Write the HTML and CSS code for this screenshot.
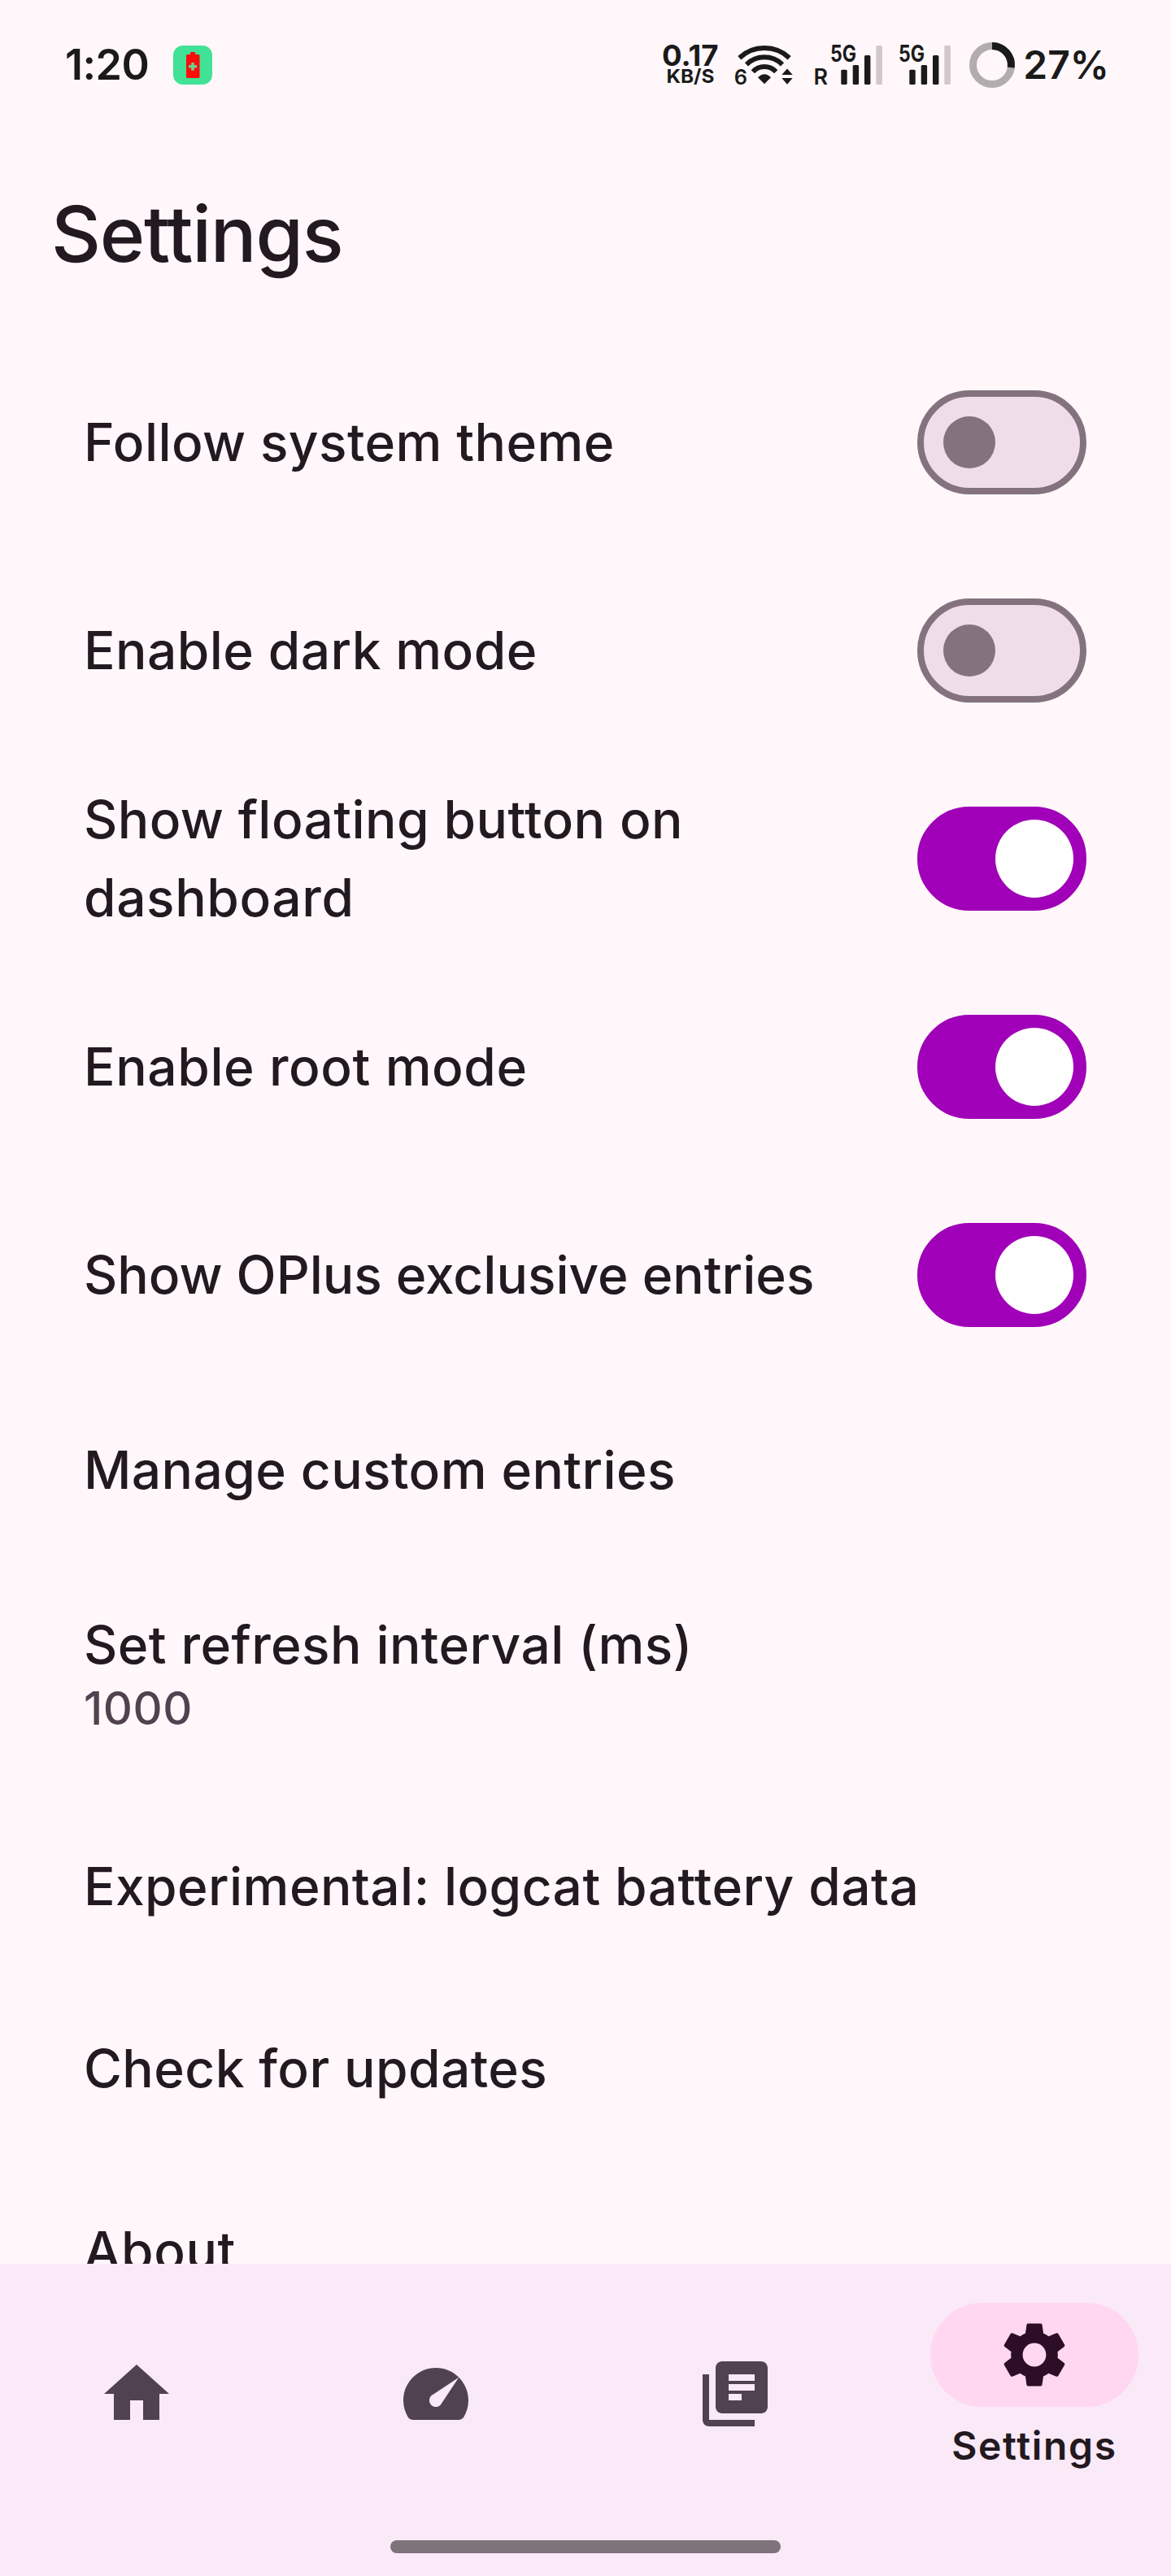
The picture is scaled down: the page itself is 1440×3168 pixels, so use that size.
FILE: index.html
```html
<!DOCTYPE html>
<html lang="en">
<head>
<meta charset="utf-8">
<title>Settings</title>
<link rel="stylesheet" href="styles.css">
</head>
<body>
<div class="screen">
  <header class="status">
    <span class="clock">1:20</span>
    <svg class="app-badge" viewBox="0 0 48 48"><rect width="48" height="48" rx="12" fill="#41e295"/><path d="M21 8h6v3h4a1.500 1.500 0 0 1 1.500 1.500v26a1.500 1.500 0 0 1-1.500 1.500h-13.500a1.500 1.500 0 0 1-1.500-1.500v-26a1.500 1.500 0 0 1 1.500-1.500h3.500z" fill="#ff0b0b"/><path d="M22.200 21h3.600v3h3.200v3.600h-3.200v3.200h-3.600v-3.200h-3.200v-3.600h3.200z" fill="#6fce8d"/></svg>
    <svg class="speed" viewBox="816 50 72 60"><text x="816" y="81.300" font-size="35.500" textLength="69.500" lengthAdjust="spacingAndGlyphs">0.17</text><text x="821.500" y="102.300" font-size="23" textLength="59" lengthAdjust="spacingAndGlyphs">KB/S</text></svg>
    <svg class="wifi" viewBox="904 50 76 60">
      <text x="904.700" y="103.600" font-size="25.500">6</text>
      <g fill="none" stroke="#1a1a1a" stroke-width="6"><path d="M911.300 71.200A45 45 0 0 1 972.700 71.200"/><path d="M920 79.300A31.500 31.500 0 0 1 964 79.300"/><path d="M927.800 88.200A19.500 19.500 0 0 1 956.200 88.200"/></g>
      <path d="M934 95.300Q942 87 950 95.300L942 103.300zM963.300 92L970 84.500L976.700 92zM963.300 96H976.700L970 103.800z"/>
    </svg>
    <svg class="signal-roaming" viewBox="1002 50 86 60">
      <text x="1002.500" y="103.700" font-size="27" textLength="17.500" lengthAdjust="spacingAndGlyphs">R</text>
      <text class="gen" x="1023" y="75.800" font-size="28" textLength="32" lengthAdjust="spacingAndGlyphs">5G</text>
      <rect x="1036.300" y="85.700" width="7.400" height="18.300" rx="1.500"/><rect x="1050.700" y="80" width="7.400" height="24" rx="1.500"/><rect x="1065" y="68" width="7.400" height="36" rx="1.500"/><rect class="dim" x="1079.300" y="56" width="7.600" height="48" rx="1.500"/>
    </svg>
    <svg class="signal" viewBox="1106 50 66 60">
      <text class="gen" x="1107" y="75.800" font-size="28" textLength="32" lengthAdjust="spacingAndGlyphs">5G</text>
      <rect x="1120.300" y="85.700" width="7.400" height="18.300" rx="1.500"/><rect x="1134.700" y="80" width="7.400" height="24" rx="1.500"/><rect x="1149" y="68" width="7.400" height="36" rx="1.500"/><rect class="dim" x="1163.300" y="56" width="7.600" height="48" rx="1.500"/>
    </svg>
    <svg class="ring" viewBox="0 0 56 56" fill="none" stroke-width="9"><circle cx="28" cy="28" r="23.500" stroke="#b2acaf"/><path d="M28 4.500A23.500 23.500 0 0 1 51.310 31" stroke="#1a1a1a"/></svg>
    <span class="percent">27%</span>
  </header>
  <h1 class="title">Settings</h1>
  <main class="list">
    <div class="row toggle"><span class="label">Follow system theme</span><span class="switch"><i class="thumb"></i></span></div>
    <div class="row toggle"><span class="label">Enable dark mode</span><span class="switch"><i class="thumb"></i></span></div>
    <div class="row toggle"><span class="label">Show floating button on <span class="wide">dashboard</span></span><span class="switch on"><i class="thumb"></i></span></div>
    <div class="row toggle"><span class="label wide">Enable root mode</span><span class="switch on"><i class="thumb"></i></span></div>
    <div class="row toggle"><span class="label tight">Show OPlus exclusive entries</span><span class="switch on"><i class="thumb"></i></span></div>
    <div class="row"><span class="label">Manage custom entries</span></div>
    <div class="row stacked"><span class="label">Set refresh interval (ms)</span><span class="value">1000</span></div>
    <div class="row"><span class="label">Experimental: logcat battery data</span></div>
    <div class="row"><span class="label">Check for updates</span></div>
    <div class="row"><span class="label wide">About</span></div>
  </main>
  <footer class="bottom">
    <nav class="nav">
      <a class="tab"><svg class="icon" viewBox="0 0 24 24"><path d="M10 20v-6h4v6h5v-8h3L12 3 2 12h3v8z"/></svg></a>
      <a class="tab"><svg class="icon" viewBox="0 0 24 24"><path fill-rule="evenodd" d="M12 4C6.480 4 2 8.480 2 14c0 1.800.5 3.500 1.340 5 .36.63 1 1 1.730 1h13.850c.72 0 1.380-.38 1.730-1 .87-1.500 1.350-3.200 1.350-5 0-5.520-4.480-10-10-10zM13.410 15.410c-.78.78-2.050.78-2.830 0s-.78-2.050 0-2.830L19.070 6.930z"/></svg></a>
      <a class="tab"><svg class="icon" viewBox="0 0 24 24"><path fill-rule="evenodd" d="M4 6H2v14c0 1.100.9 2 2 2h14v-2H4zM20 2H8c-1.100 0-2 .9-2 2v12c0 1.100.9 2 2 2h12c1.100 0 2-.9 2-2V4c0-1.100-.9-2-2-2zM10 6h8v2h-8zM10 9h8v2h-8zM10 12h4v2h-4z"/></svg></a>
      <a class="tab active"><span class="pill"><svg class="icon" viewBox="0 0 24 24"><path fill-rule="evenodd" d="M19.140 12.940c.04-.3.06-.61.06-.94 0-.32-.02-.64-.07-.94l2.030-1.580c.18-.14.23-.41.12-.61l-1.920-3.320c-.12-.22-.37-.29-.59-.22l-2.390.96c-.5-.38-1.030-.7-1.620-.94L14.400 2.810c-.04-.24-.24-.41-.48-.41h-3.840c-.24 0-.43.17-.47.41L9.250 5.350C8.660 5.590 8.120 5.920 7.630 6.290L5.240 5.330c-.22-.08-.47 0-.59.22L2.740 8.870c-.12.21-.08.47.12.61l2.030 1.580c-.05.3-.09.63-.09.94s.02.64.07.94l-2.030 1.580c-.18.14-.23.41-.12.61l1.920 3.320c.12.22.37.29.59.22l2.390-.96c.5.38 1.030.7 1.620.94l.36 2.540c.05.24.24.41.48.41h3.840c.24 0 .44-.17.47-.41l.36-2.540c.59-.24 1.130-.56 1.620-.94l2.390.96c.22.08.47 0 .59-.22l1.920-3.320c.12-.22.07-.47-.12-.61zM12 15.600A3.600 3.600 0 1 1 12 8.400A3.600 3.600 0 0 1 12 15.600z"/></svg></span><span class="tab-label">Settings</span></a>
    </nav>
    <div class="handle"></div>
  </footer>
</div>
</body>
</html>
```
FILE: styles.css
```css
* { box-sizing: border-box; }
body { margin: 0; background: #fff7fa; font-family: Inter, "Liberation Sans", sans-serif; color: #231920; }
.screen { width: 1440px; height: 3168px; display: flex; flex-direction: column; overflow: hidden; }

/* system status bar */
.status { flex: none; height: 160px; padding: 50px 76px 50px 80px; display: flex; align-items: center; color: #1a1a1a; }
.status svg { flex: none; height: 60px; fill: #1a1a1a; overflow: visible; }
.status text { font-family: Inter, sans-serif; font-weight: 600; }
.clock { width: 135px; font-size: 52px; line-height: 60px; font-weight: 600; letter-spacing: -0.5px; }
.status .app-badge { width: 48px; height: 48px; }
.speed { width: 72px; margin-left: 553px; }
.status .speed text { font-weight: 700; }
.wifi { width: 76px; margin-left: 16px; }
.signal-roaming { width: 86px; margin-left: 22px; }
.signal { width: 66px; margin-left: 18px; }
.status .gen { font-weight: 700; }
.status .dim { fill: #d0c8cc; }
.status .ring { width: 56px; height: 56px; margin-left: 22px; fill: none; }
.percent { margin-left: 10px; font-size: 48px; line-height: 60px; font-weight: 600; }

.title { flex: none; height: 256px; margin: 0; padding-left: 63px; font-size: 94.500px; line-height: 255px; font-weight: 500; letter-spacing: -1.250px; }

/* preference rows */
.list { flex: 1; min-height: 0; overflow: hidden; display: flex; flex-direction: column; }
.row { flex: none; height: 224px; padding: 0 104px 0 103px; display: flex; align-items: center; justify-content: space-between; }
.toggle { height: 256px; }
.label { font-size: 64px; line-height: 96px; font-weight: 500; letter-spacing: 0.420px; }
.toggle .label { max-width: 920px; }
.label.tight { letter-spacing: 0; }
.wide, .label.wide { letter-spacing: 0.600px; }
.stacked { height: 288px; padding-top: 59px; flex-direction: column; align-items: flex-start; justify-content: flex-start; }
.stacked .label { line-height: 88px; }
.value { font-size: 56px; line-height: 68px; font-weight: 500; letter-spacing: 0.600px; color: #50424e; }
.switch { flex: none; width: 208px; height: 128px; padding: 0 24px; display: flex; align-items: center; border: 8px solid #84737f; border-radius: 64px; background: #efdee9; }
.thumb { width: 64px; height: 64px; border-radius: 50%; background: #84737f; }
.switch.on { padding: 0 8px; justify-content: flex-end; border-color: #a000b8; background: #a000b8; }
.on .thumb { width: 96px; height: 96px; background: #fff; }

/* bottom navigation */
.bottom { flex: none; height: 384px; display: flex; flex-direction: column; align-items: center; background: #fae9f7; }
.nav { width: 100%; height: 340px; display: flex; gap: 32px; }
.tab { flex: 1; height: 320px; display: flex; flex-direction: column; align-items: center; justify-content: center; }
.icon { width: 96px; height: 96px; display: block; fill: #50424e; }
.active { padding-top: 48px; justify-content: flex-start; }
.pill { width: 256px; height: 128px; display: flex; align-items: center; justify-content: center; border-radius: 64px; background: #ffd7f1; }
.active .icon { fill: #2d0e27; }
.tab-label { margin-top: 16px; font-size: 48px; line-height: 64px; font-weight: 600; letter-spacing: 1.660px; }
.handle { width: 480px; height: 16px; border-radius: 8px; background: #7f737b; }
```
